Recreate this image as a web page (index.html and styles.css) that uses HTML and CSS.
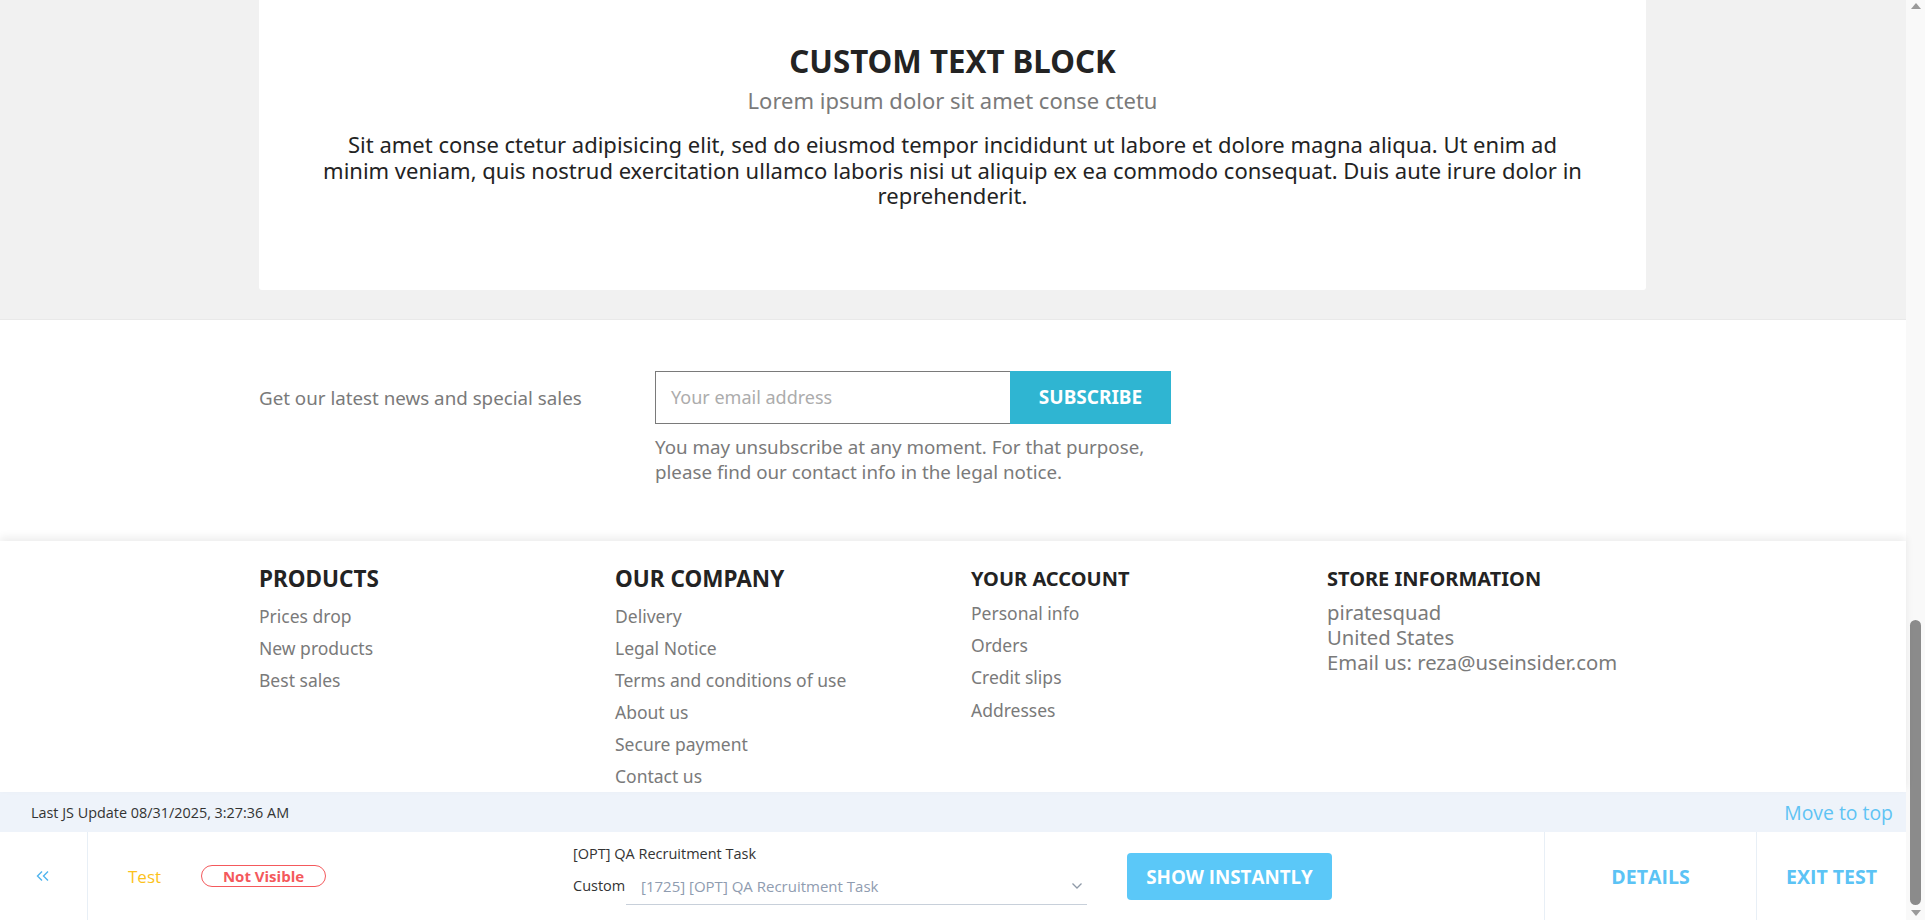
FILE: index.html
```html
<!DOCTYPE html>
<html lang="en">
<head>
<meta charset="utf-8">
<title>Custom text block</title>
<link rel="stylesheet" href="styles.css">
</head>
<body>
<div class="viewport">
  <div class="page">
    <section class="wrapper">
      <div class="container">
        <div class="custom-text">
          <h2 class="ct-title">CUSTOM TEXT BLOCK</h2>
          <p class="ct-sub">Lorem ipsum dolor sit amet conse ctetu</p>
          <p class="ct-body">Sit amet conse ctetur adipisicing elit, sed do eiusmod tempor incididunt ut labore et dolore magna aliqua. Ut enim ad minim veniam, quis nostrud exercitation ullamco laboris nisi ut aliquip ex ea commodo consequat. Duis aute irure dolor in reprehenderit.</p>
        </div>
      </div>
    </section>

    <section class="newsletter">
      <div class="container nl-row">
        <p class="nl-label">Get our latest news and special sales</p>
        <div class="nl-form">
          <div class="nl-inputs">
            <div class="nl-input">Your email address</div>
            <div class="nl-btn">SUBSCRIBE</div>
          </div>
          <p class="nl-cond">You may unsubscribe at any moment. For that purpose,<br>please find our contact info in the legal notice.</p>
        </div>
      </div>
    </section>

    <footer class="footer">
      <div class="container fcols">
        <div class="fcol">
          <h3 class="fh-big">PRODUCTS</h3>
          <ul class="flinks">
            <li>Prices drop</li>
            <li>New products</li>
            <li>Best sales</li>
          </ul>
        </div>
        <div class="fcol">
          <h3 class="fh-big">OUR COMPANY</h3>
          <ul class="flinks">
            <li>Delivery</li>
            <li>Legal Notice</li>
            <li>Terms and conditions of use</li>
            <li>About us</li>
            <li>Secure payment</li>
            <li>Contact us</li>
          </ul>
        </div>
        <div class="fcol">
          <h3 class="fh-small">YOUR ACCOUNT</h3>
          <ul class="flinks flinks-acc">
            <li>Personal info</li>
            <li>Orders</li>
            <li>Credit slips</li>
            <li>Addresses</li>
          </ul>
        </div>
        <div class="fcol">
          <h3 class="fh-small">STORE INFORMATION</h3>
          <div class="store">piratesquad<br>United States<br>Email us: reza@useinsider.com</div>
        </div>
      </div>
    </footer>

    <div class="ins">
      <div class="ins-band">
        <span class="ins-update">Last JS Update 08/31/2025, 3:27:36 AM</span>
        <span class="ins-top">Move to top</span>
      </div>
      <div class="ins-row">
        <div class="ins-collapse">
          <svg width="14" height="12" viewBox="0 0 14 12"><path d="M6 1.5 1.5 6 6 10.5M12 1.5 7.5 6 12 10.5" fill="none" stroke="#4fb4ee" stroke-width="1.4"/></svg>
        </div>
        <div class="ins-main">
          <span class="ins-test">Test</span>
          <span class="ins-badge">Not Visible</span>
          <div class="ins-camp">
            <div class="ins-camp-name">[OPT] QA Recruitment Task</div>
            <div class="ins-camp-sel">
              <span class="ins-custom">Custom</span>
              <div class="ins-select">
                <span>[1725] [OPT] QA Recruitment Task</span>
                <svg width="12" height="8" viewBox="0 0 12 8"><path d="M1.5 1.5 6 6 10.5 1.5" fill="none" stroke="#8f9aa8" stroke-width="1.3"/></svg>
              </div>
            </div>
          </div>
          <div class="ins-show">SHOW INSTANTLY</div>
        </div>
        <div class="ins-details">DETAILS</div>
        <div class="ins-exit">EXIT TEST</div>
      </div>
    </div>
  </div>

  <div class="scrollbar">
    <div class="sb-arrow sb-up"></div>
    <div class="sb-track"><div class="sb-thumb"></div></div>
    <div class="sb-arrow sb-down"></div>
  </div>
</div>
</body>
</html>
```

FILE: styles.css
```css
* { box-sizing: border-box; }
html, body { margin: 0; padding: 0; }
body {
  font-family: "Noto Sans", "Open Sans", sans-serif;
  color: #232323;
  background: #fff;
  overflow: hidden;
}
.viewport {
  display: flex;
  width: 1925px;
  height: 920px;
  overflow: hidden;
}
.page {
  flex: 1;
  display: flex;
  flex-direction: column;
  min-width: 0;
}
.container {
  width: 1387px;
  margin-left: calc(50% - 694px);
}

/* grey wrapper with custom text block */
.wrapper {
  height: 320px;
  background: #f1f1f1;
  border-bottom: 1px solid #e9e9e9;
  flex: none;
}
.custom-text {
  background: #fff;
  height: 290px;
  border-radius: 0 0 3px 3px;
  padding: 43px 59px 0;
  text-align: center;
}
.ct-title {
  margin: 0;
  font-size: 31.25px;
  line-height: 36px;
  font-weight: 700;
  color: #232323;
}
.ct-sub {
  margin: 9px 0 0;
  font-size: 22px;
  line-height: 25px;
  color: #7a7a7a;
}
.ct-body {
  margin: 19px 0 0;
  font-size: 22px;
  line-height: 25.5px;
  color: #232323;
}

/* newsletter */
.newsletter {
  height: 221px;
  flex: none;
  padding-top: 51px;
  background: #fff;
}
.nl-row {
  display: flex;
}
.nl-label {
  width: 396px;
  margin: 0;
  height: 53px;
  line-height: 53px;
  font-size: 18.75px;
  color: #7a7a7a;
}
.nl-inputs {
  display: flex;
  height: 53px;
}
.nl-input {
  width: 355px;
  border: 1px solid #7a7a7a;
  border-right: none;
  padding-left: 15px;
  line-height: 51px;
  font-size: 18px;
  color: #acacac;
}
.nl-btn {
  width: 161px;
  background: #2fb5d2;
  color: #fff;
  font-weight: 700;
  font-size: 19px;
  line-height: 53px;
  text-align: center;
}
.nl-cond {
  margin: 10px 0 0;
  font-size: 18.75px;
  line-height: 25px;
  color: #7a7a7a;
}

/* footer */
.footer {
  height: 251px;
  flex: none;
  padding-top: 24px;
  background: #fff;
  box-shadow: 0 -4px 8px rgba(0, 0, 0, 0.07);
  position: relative;
  overflow: hidden;
}
.fcols {
  display: grid;
  grid-template-columns: repeat(4, 356px);
}
.fcol h3 {
  margin: 0;
  height: 27px;
  line-height: 27px;
  font-weight: 700;
  color: #232323;
}
.fh-big { font-size: 22.5px; }
.fh-small { font-size: 20px; }
.flinks {
  list-style: none;
  margin: 8px 0 0;
  padding: 0;
}
.flinks li {
  font-size: 17.5px;
  line-height: 32px;
  color: #7a7a7a;
}
.flinks-acc { margin-top: 5px; }
.flinks-acc li { line-height: 32.2px; }
.store {
  margin-top: 8px;
  font-size: 20.25px;
  line-height: 25px;
  color: #7a7a7a;
}

/* insider test bar */
.ins {
  flex: none;
  height: 128px;
  font-family: "Open Sans", "Noto Sans", sans-serif;
  background: #fff;
}
.ins-band {
  height: 40px;
  background: #eef3fa;
  display: flex;
  align-items: center;
  justify-content: space-between;
  padding: 0 13px 0 31px;
}
.ins-update {
  font-size: 14.4px;
  color: #333;
}
.ins-top {
  font-size: 19.4px;
  color: #5fc3f4;
}
.ins-row {
  height: 88px;
  display: flex;
  align-items: stretch;
}
.ins-collapse {
  width: 88px;
  border-right: 1px solid #e8eff6;
  display: flex;
  align-items: center;
  justify-content: center;
  padding-right: 2px;
}
.ins-main {
  flex: 1;
  display: flex;
  align-items: center;
  padding-left: 40px;
}
.ins-test {
  font-size: 17px;
  color: #fcc21b;
  width: 33px;
}
.ins-badge {
  margin-left: 40px;
  width: 125px;
  height: 22px;
  border: 1px solid #f4595c;
  border-radius: 11px;
  color: #f4595c;
  font-weight: 700;
  font-size: 15px;
  line-height: 20px;
  text-align: center;
}
.ins-camp {
  margin-left: 247px;
  margin-top: -3px;
}
.ins-camp-name {
  font-size: 14.5px;
  line-height: 20px;
  color: #333;
}
.ins-camp-sel {
  display: flex;
  align-items: flex-end;
  margin-top: 8px;
}
.ins-custom {
  font-size: 14.5px;
  line-height: 22px;
  color: #333;
  width: 53px;
  padding-bottom: 8px;
}
.ins-select {
  width: 461px;
  height: 33px;
  border-bottom: 1px solid #c8d0da;
  display: flex;
  align-items: center;
  justify-content: space-between;
  padding: 0 4px 4px 15px;
  font-size: 15px;
  color: #8f9cb0;
}
.ins-show {
  margin-left: 40px;
  width: 205px;
  height: 47px;
  border-radius: 4px;
  background: #5bc8f8;
  color: #fff;
  font-weight: 700;
  font-size: 18.75px;
  line-height: 47px;
  text-align: center;
}
.ins-details, .ins-exit {
  border-left: 1px solid #e8eff6;
  display: flex;
  align-items: center;
  justify-content: center;
  font-weight: 700;
  font-size: 19.5px;
  color: #5bc3f5;
}
.ins-details { width: 212px; }
.ins-exit { width: 150px; }

/* fake window scrollbar */
.scrollbar {
  width: 19px;
  flex: none;
  background: #f9f9f9;
  display: flex;
  flex-direction: column;
  align-items: center;
}
.sb-arrow {
  width: 0;
  height: 0;
  border-left: 5px solid transparent;
  border-right: 5px solid transparent;
  flex: none;
}
.sb-up {
  margin-top: 3px;
  border-bottom: 6px solid #9a9a9a;
}
.sb-down {
  margin-bottom: 4px;
  border-top: 6px solid #9a9a9a;
}
.sb-track {
  flex: 1;
  width: 100%;
  display: flex;
  flex-direction: column;
  justify-content: flex-end;
  align-items: center;
  padding-bottom: 5px;
}
.sb-thumb {
  width: 11px;
  height: 285px;
  border-radius: 6px;
  background: #8b8b8b;
}
```
